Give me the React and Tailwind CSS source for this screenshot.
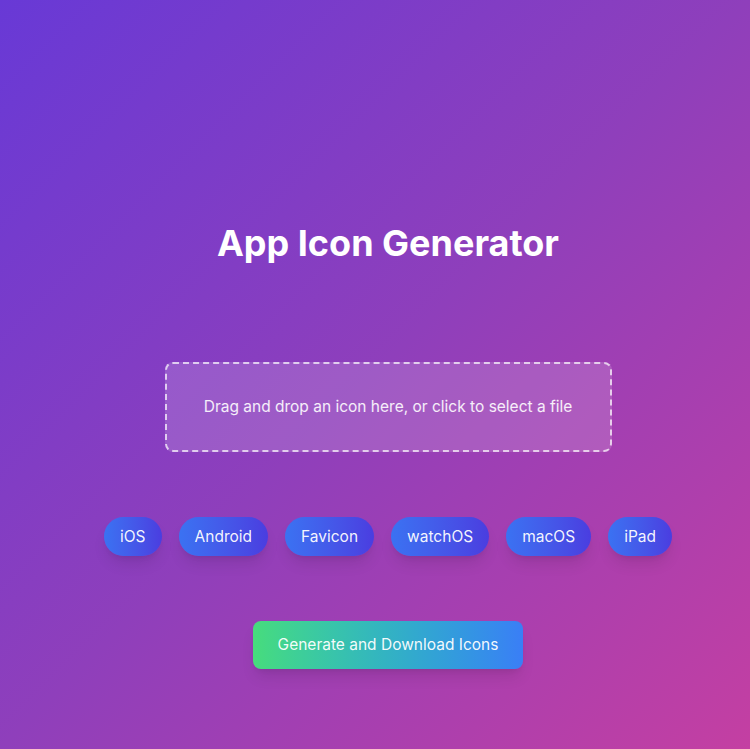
import React, { useState } from 'react';

const platforms = ['iOS', 'Android', 'Favicon', 'watchOS', 'macOS', 'iPad'];

export default function App() {
    const [selected, setSelected] = useState([]);

    const toggle = (p) => {
        setSelected((s) => (s.includes(p) ? s.filter((x) => x !== p) : [...s, p]));
    };

    return (
        <div className="min-h-[749px] w-full flex flex-col items-center pl-[26px] bg-[linear-gradient(135deg,#6839d6_0%,#8f3fbb_50%,#c43fa2_100%)] font-['Inter','Noto_Sans',sans-serif] text-white">
            <h1 className="mt-[223px] text-[36px] leading-[40px] font-bold">App Icon Generator</h1>

            <div className="mt-[99px] w-[447px] h-[90px] flex items-center justify-center rounded-lg border-2 border-dashed border-white/70 bg-white/15 cursor-pointer">
                <p className="text-[15.5px] text-white/90">Drag and drop an icon here, or click to select a file</p>
            </div>

            <div className="mt-[65px] flex gap-[17px]">
                {platforms.map((p) => (
                    <button
                        key={p}
                        onClick={() => toggle(p)}
                        className="h-[39px] px-4 rounded-full bg-gradient-to-r from-[#3a72f2] to-[#4a3de0] text-[15.5px] text-white/95 shadow-lg"
                    >
                        {p}
                    </button>
                ))}
            </div>

            <button className="mt-[65px] w-[270px] h-[48px] rounded-lg bg-gradient-to-r from-[#47dc7c] to-[#3a7ef6] text-[15.5px] text-white/95 shadow-lg">
                Generate and Download Icons
            </button>
        </div>
    );
}
